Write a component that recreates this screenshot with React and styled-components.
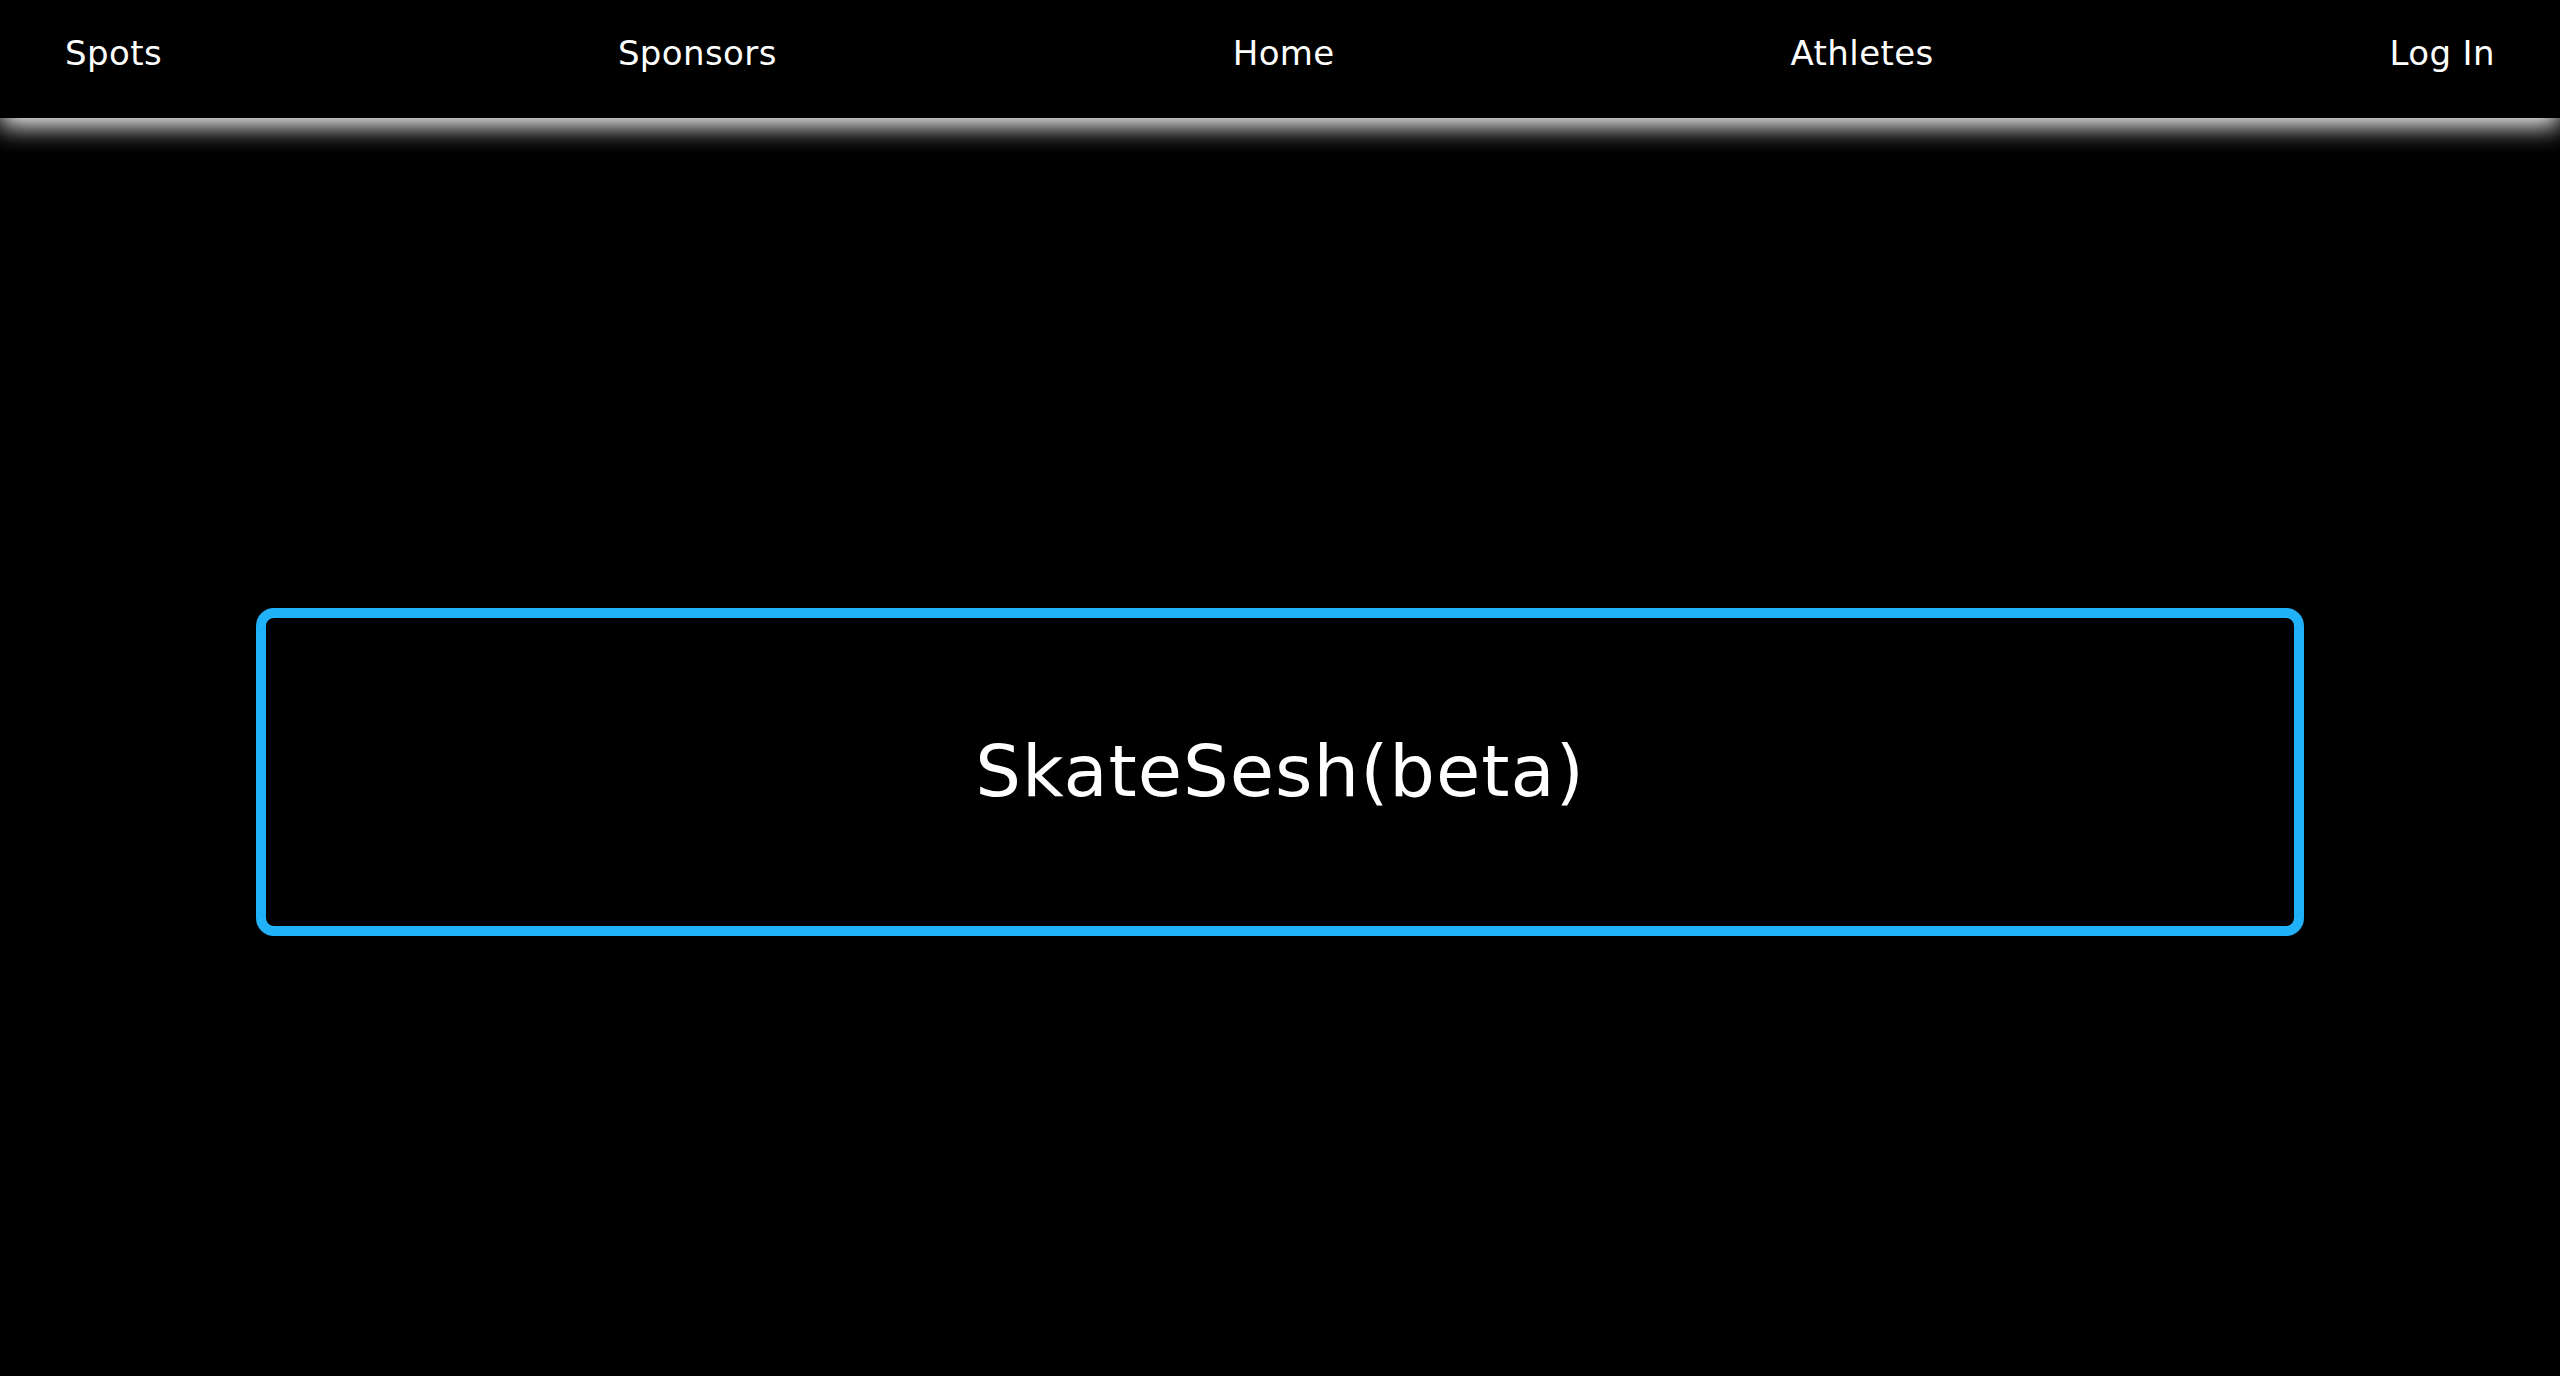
import React from "react";
import styled, { createGlobalStyle } from "styled-components";

const GlobalStyle = createGlobalStyle`
  html, body {
    margin: 0;
    padding: 0;
    background: #000;
  }
  body {
    font-family: "DejaVu Sans", "Liberation Sans", sans-serif;
    color: #fff;
  }
  #root {
    min-height: 100vh;
  }
`;

const Page = styled.div`
  min-height: 100vh;
  background: #000;
  display: flex;
  flex-direction: column;
`;

const NavBar = styled.nav`
  position: relative;
  z-index: 1;
  box-sizing: border-box;
  height: 118px;
  padding: 34px 65px 0;
  display: flex;
  justify-content: space-between;
  align-items: flex-start;
  background: #000;
  box-shadow: 0 8px 24px #fff;
`;

const NavLink = styled.a`
  font-family: "DejaVu Sans", "Liberation Sans", sans-serif;
  font-size: 34px;
  line-height: 38px;
  color: #fff;
  text-decoration: none;
  cursor: pointer;
  letter-spacing: 0.4px;
`;

const Main = styled.main`
  flex: 1;
  display: flex;
  flex-direction: column;
  align-items: center;
  padding-top: 490px;
`;

const HeroBox = styled.section`
  box-sizing: border-box;
  width: 80%;
  height: 328px;
  border: 10px solid #20b1f9;
  border-radius: 18px;
  display: flex;
  align-items: center;
  justify-content: center;
`;

const Title = styled.h1`
  margin: 0;
  font-family: "DejaVu Sans", "Liberation Sans", sans-serif;
  font-weight: 400;
  font-size: 72px;
  line-height: 1.16;
  color: #fff;
  letter-spacing: 1px;
`;

const links = ["Spots", "Sponsors", "Home", "Athletes", "Log In"];

export default function App() {
  return (
    <>
      <GlobalStyle />
      <Page>
        <NavBar>
          {links.map((l) => (
            <NavLink key={l}>{l}</NavLink>
          ))}
        </NavBar>
        <Main>
          <HeroBox>
            <Title>SkateSesh(beta)</Title>
          </HeroBox>
        </Main>
      </Page>
    </>
  );
}
